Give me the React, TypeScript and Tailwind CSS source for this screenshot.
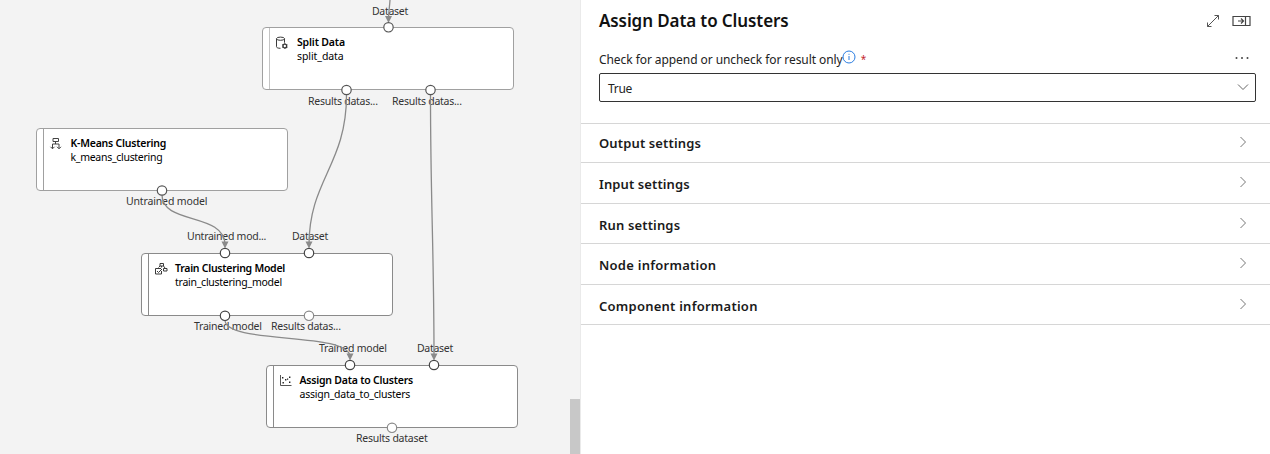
import React from "react";

const INK = "#8a8a8a";

function SplitIcon() {
  return (
    <svg width="14" height="14" viewBox="0 0 14 14" fill="none" stroke="#3a3a3a" strokeWidth="1">
      <ellipse cx="5.500" cy="2.700" rx="4" ry="1.600" />
      <path d="M1.500 2.700v8c0 1 1.600 1.600 4 1.600M9.500 2.700v4" />
      <circle cx="9.800" cy="10" r="1.900" strokeWidth="1.400" />
      <path d="M9.800 7.200v1M9.800 11.800v1M7.300 8.600l.9.5M11.400 10.900l.9.5M7.300 11.400l.9-.5M11.400 9.100l.9-.5" />
    </svg>
  );
}

function KMeansIcon() {
  return (
    <svg width="14" height="14" viewBox="0 0 14 14" fill="none" stroke="#444" strokeWidth="1">
      <path d="M4 1.500h5.500v3H4zM6.500 4.500v2.500M3.500 11.500v-4.500h6.500v4.500M1.500 9.800l2 2 2-2M8 9.800l2 2 2-2" />
    </svg>
  );
}

function TrainIcon() {
  return (
    <svg width="14" height="14" viewBox="0 0 14 14" fill="none" stroke="#3a3a3a" strokeWidth="1">
      <path d="M6 1.500h3.500v2.500H6zM7.500 4v1.500M4.500 5.500L6 4M9.500 4l1.500 2M9.500 6.500H13V9H9.500zM7 6.500h-5.500v5.500h6V9M3 9l1.500 1.500L8 7" />
    </svg>
  );
}

function ScatterIcon() {
  return (
    <svg width="14" height="14" viewBox="0 0 14 14" fill="none">
      <path d="M1.500 1v10.500H12.500" stroke="#555" />
      <path d="M3 3h1.400v1.400H3zM6 5h1.400v1.400H6zM10 2.500h1.400v1.400H10zM3.500 8h1.400v1.400H3.500zM8 4.500h1.200v1.200H8zM10 7.500h1.400v1.400H10z" fill="#222" />
    </svg>
  );
}

type NodeProps = { pos: string; title: string; name: string; tt: string; nt: string; icon: React.ReactNode; line: string; bar: string; iconBox: string };

function GraphNode({ pos, title, name, tt, nt, icon, line, bar, iconBox }: NodeProps) {
  return (
    <div className={`absolute flex h-[63px] w-[252px] rounded-[4px] border bg-white ${line} ${pos}`}>
      <div className={`w-[7px] shrink-0 border-r ${bar}`} />
      <div className={`mt-[8px] ml-[5px] shrink-0 ${iconBox}`}>{icon}</div>
      <div className="mt-[7px] text-[10.5px] leading-[14px] whitespace-nowrap text-black">
        <div className={`font-semibold ${tt}`}>{title}</div>
        <div className={nt}>{name}</div>
      </div>
    </div>
  );
}

const labels = [
  ["Dataset", "left-[372px] top-[4px] tracking-[-0.3px]"],
  ["Results datas...", "left-[308px] top-[94px] tracking-[-0.25px]"],
  ["Results datas...", "left-[392px] top-[94px] tracking-[-0.25px]"],
  ["Untrained model", "left-[126px] top-[194px] tracking-[-0.15px]"],
  ["Untrained mod...", "left-[187px] top-[229px] tracking-[-0.27px]"],
  ["Dataset", "left-[292px] top-[229px] tracking-[-0.3px]"],
  ["Trained model", "left-[194px] top-[319px] tracking-[-0.24px]"],
  ["Results datas...", "left-[271px] top-[319px] tracking-[-0.25px]"],
  ["Trained model", "left-[319px] top-[341px] tracking-[-0.24px]"],
  ["Dataset", "left-[417px] top-[341px] tracking-[-0.3px]"],
  ["Results dataset", "left-[356px] top-[431px] tracking-[-0.23px]"],
];

const ports: [number, number, string][] = [
  [388.500, 27.300, "#555"],
  [346.500, 90, "#555"],
  [430.500, 90, "#555"],
  [162, 190.500, "#555"],
  [225, 253, "#444"],
  [309, 253, "#444"],
  [225, 315.800, "#444"],
  [309, 315.800, "#8a8a8a"],
  [350, 365, "#444"],
  [434, 365, "#444"],
  [392, 427.800, "#8a8a8a"],
];

const arrows: [number, number][] = [[388.500, 23], [225, 248.500], [309, 248.500], [350, 360.500], [434, 360.500]];

function Canvas() {
  return (
    <div className="relative h-[454px] w-[580px] shrink-0 overflow-hidden bg-[#f3f3f3]">
      <GraphNode pos="left-[262px] top-[27px]" title="Split Data" name="split_data" tt="tracking-[-0.16px]" nt="tracking-[-0.08px]" icon={<SplitIcon />} iconBox="w-[22px]" line="border-[#a0a0a0]" bar="border-[#c4c4c4]" />
      <GraphNode pos="left-[36px] top-[128px]" title="K-Means Clustering" name="k_means_clustering" tt="tracking-[-0.22px]" nt="tracking-[-0.29px]" icon={<KMeansIcon />} iconBox="w-[21.5px]" line="border-[#a0a0a0]" bar="border-[#a0a0a0]" />
      <GraphNode pos="left-[141px] top-[253px]" title="Train Clustering Model" name="train_clustering_model" tt="tracking-[-0.26px]" nt="tracking-[-0.26px]" icon={<TrainIcon />} iconBox="w-[21px]" line="border-[#8a8a8a]" bar="border-[#8a8a8a]" />
      <GraphNode pos="left-[266px] top-[365px]" title="Assign Data to Clusters" name="assign_data_to_clusters" tt="tracking-[-0.22px]" nt="tracking-[-0.24px]" icon={<ScatterIcon />} iconBox="w-[20.5px]" line="border-[#8a8a8a]" bar="border-[#8a8a8a]" />
      {labels.map(([text, pos]) => (
        <div key={pos} className={`absolute text-[10.5px] leading-[14px] whitespace-nowrap text-[#333] ${pos}`}>{text}</div>
      ))}
      <svg className="absolute inset-0" width="580" height="454" viewBox="0 0 580 454" fill="none">
        <g stroke={INK} strokeWidth="1.300">
          <path d="M390 0C389.500 8 388.500 12 388.500 20" />
          <path d="M346.500 95C346.500 165 309 180 309 245" />
          <path d="M430.500 95C430.500 200 434 250 434 357" />
          <path d="M162 195C162 225 225 212 225 245" />
          <path d="M225 320C225 345 350 331 350 357" />
        </g>
        {arrows.map(([x, y]) => (
          <path key={`${x}-${y}`} d={`M${x - 3.500} ${y - 7}h7L${x} ${y}z`} fill={INK} />
        ))}
        {ports.map(([x, y, c]) => (
          <circle key={`${x}-${y}`} cx={x} cy={y} r="4.700" fill="#fff" stroke={c} strokeWidth="1.200" />
        ))}
      </svg>
      <div className="absolute top-[399px] right-0 h-[55px] w-[10px] bg-[#c8c8c8]" />
    </div>
  );
}

const sections = [
  ["Output settings", "h-[39px]", "tracking-[0.13px] pt-[2px]"],
  ["Input settings", "h-[41px]", "tracking-[0.1px] pt-[3px]"],
  ["Run settings", "h-[40px]", "tracking-[0.15px] pt-[4px]"],
  ["Node information", "h-[41px]", "tracking-[0.25px] pt-[3px]"],
  ["Component information", "h-[40px]", "tracking-[0.24px] pt-[4px]"],
];

export default function App() {
  return (
    <div className="flex h-[454px] w-[1270px] overflow-hidden bg-white font-['Noto_Sans',sans-serif]">
      <Canvas />
      <div className="flex min-w-0 flex-1 flex-col border-l border-[#eaeaea]">
        <div className="flex h-[123px] flex-col pr-[14px] pl-[18px]">
          <div className="flex h-[41px] items-center justify-between">
            <h1 className="text-[17px] leading-6 font-semibold tracking-[-0.1px] whitespace-nowrap text-[#111]">Assign Data to Clusters</h1>
            <div className="mr-[5px] flex items-center gap-[12px]">
              <svg width="14" height="14" viewBox="0 0 14 14" fill="none" stroke="#555"><path d="M1.500 12.500l11-11M8.500 1.500h4v4M1.500 8.500v4h4" /></svg>
              <svg width="19" height="12" viewBox="0 0 19 12" fill="none" stroke="#444"><path d="M1 1.500h17v9H1zM13.500 1.500v9M6 6h5.500M9 3.500L11.500 6 9 8.500" strokeWidth="1.200" /></svg>
            </div>
          </div>
          <div className="flex h-[32px] items-center">
            <span className="mt-[5px] text-[12px] tracking-[-0.07px] whitespace-nowrap text-[#222]">Check for append or uncheck for result only</span>
            <svg className="-mt-px -ml-px shrink-0" width="14" height="14" viewBox="0 0 14 14" fill="none" stroke="#2a7de1"><circle cx="7" cy="7" r="6" /><path d="M7 6v4M7 3.800v1" /></svg>
            <span className="mt-[5px] ml-[5px] text-[10px] text-[#c4262e]">*</span>
            <svg className="mt-[2px] mr-[7px] ml-auto" width="14" height="4" viewBox="0 0 14 4" fill="#444"><circle cx="1.500" cy="2" r="1" /><circle cx="7" cy="2" r="1" /><circle cx="12.500" cy="2" r="1" /></svg>
          </div>
          <div className="flex h-[29px] items-center justify-between rounded-[2px] border border-[#333] pr-[6px] pl-[8px]">
            <span className="pt-[2px] text-[12px] tracking-[-0.3px] text-[#222]">True</span>
            <svg className="-mt-px" width="12" height="8" viewBox="0 0 12 8" fill="none" stroke="#666"><path d="M1 1.500l5 5 5-5" /></svg>
          </div>
        </div>
        {sections.map(([text, height, tracking]) => (
          <div key={text} className={`flex shrink-0 items-center justify-between border-t border-[#d6d6d6] pr-[23px] pl-[18px] ${height}`}>
            <span className={`text-[13px] font-semibold whitespace-nowrap text-[#1a1a1a] ${tracking}`}>{text}</span>
            <svg className="-mt-[2px]" width="8" height="12" viewBox="0 0 8 12" fill="none" stroke="#777"><path d="M1.500 1l5 5-5 5" /></svg>
          </div>
        ))}
        <div className="h-px bg-[#d6d6d6]" />
      </div>
    </div>
  );
}
